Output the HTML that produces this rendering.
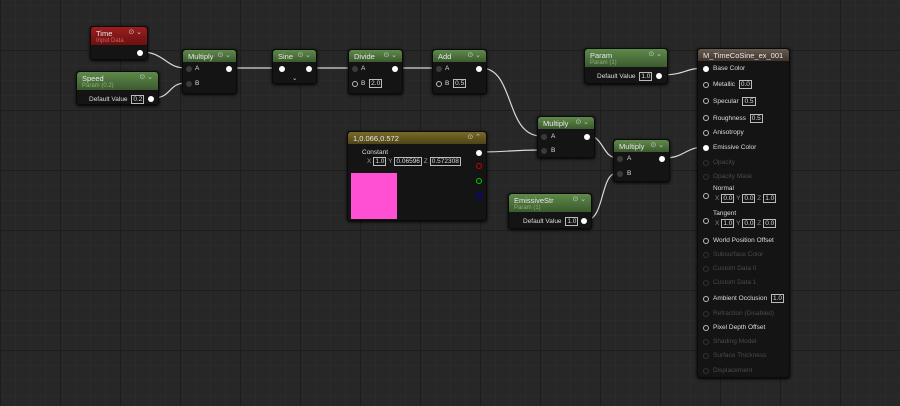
<!DOCTYPE html>
<html><head><meta charset="utf-8"><style>
*{margin:0;padding:0;box-sizing:border-box}
body{width:900px;height:406px;overflow:hidden;background:#272727;font-family:"Liberation Sans",sans-serif;position:relative;
background-image:linear-gradient(#1d1d1d 1px,transparent 1px),linear-gradient(90deg,#1d1d1d 1px,transparent 1px),linear-gradient(#2b2b2b 1px,transparent 1px),linear-gradient(90deg,#2b2b2b 1px,transparent 1px);
background-size:60px 60px,60px 60px,15px 15px,15px 15px;background-position:0 50px,0 0,0 5px,0 0}
.n{position:absolute;background:#141414;border-radius:3px;box-shadow:0 1px 3px #000;border:1px solid #0a0a0a}
.h{height:12px;border-radius:3px 3px 0 0;color:#e8e8e8;font-size:7.5px;padding:2px 5px;position:relative;white-space:nowrap}
.h.g{background:linear-gradient(#5f8a4a,#3b5a2f)}
.h.r{background:linear-gradient(#9a1e1e,#6a1010)}
.h.y{background:linear-gradient(#7a6a2a,#4d4418)}
.h.b{background:linear-gradient(#6a5a4e,#3e342e)}
.sub{font-size:6px;color:#8fb07a;position:absolute;left:5px;top:11px}
.ic{position:absolute;right:5px;top:1px;font-size:7px;color:#ccc}
.t{position:absolute;font-size:6.5px;color:#ddd;white-space:nowrap}
.dim{color:#4a4a4a}
.pin{position:absolute;width:6px;height:6px;border-radius:50%;background:#fff}
.pin.o{background:none;border:1.2px solid #bbb}
.pin.d{background:#3a3a3a}
.box{display:inline-block;border:1px solid #bbb;padding:0 1px;line-height:7px;font-size:6.5px;margin-left:2px}
</style></head><body>
<svg width="900" height="406" style="position:absolute;left:0;top:0" fill="none" stroke="#d8d8d8" stroke-width="1.2">
<path d="M141 52 C165 52,165 68,186 68"/>
<path d="M153 98 C172 98,168 83,186 83"/>
<path d="M231 68 L281 68"/>
<path d="M311 68 L352 68"/>
<path d="M397 68 L436 68"/>
<path d="M481 68 C515 68,505 136,541 136"/>
<path d="M481 152 C510 152,510 150,541 150"/>
<path d="M589 136 C603 136,603 158,617 158"/>
<path d="M586 220 C605 220,600 173,617 173"/>
<path d="M664 158 C685 158,685 147,705 147"/>
<path d="M661 75 C685 75,685 68,705 68"/>
</svg>

<div class="n" style="left:90px;top:26px;width:58px;height:34px"><div class="h r" style="height:18px">Time<span class="sub" style="color:#d06060">Input Data</span><span class="ic">⊙ ⌄</span></div><div class="pin" style="left:46px;top:23px"></div></div>

<div class="n" style="left:76px;top:71px;width:83px;height:34px"><div class="h g" style="height:18px">Speed<span class="sub">Param (0.2)</span><span class="ic">⊙ ⌄</span></div><span class="t" style="left:12px;top:23px">Default Value <span class="box">0.2</span></span><div class="pin" style="left:71px;top:24px"></div></div>

<div class="n" style="left:182px;top:49px;width:55px;height:45px"><div class="h g">Multiply<span class="ic">⊙ ⌄</span></div><div class="pin d" style="left:3px;top:16px"></div><span class="t" style="left:12px;top:15px">A</span><div class="pin d" style="left:3px;top:31px"></div><span class="t" style="left:12px;top:30px">B</span><div class="pin" style="left:43px;top:16px"></div></div>

<div class="n" style="left:272px;top:49px;width:45px;height:35px"><div class="h g">Sine<span class="ic">⊙ ⌄</span></div><div class="pin" style="left:6px;top:16px"></div><div class="pin" style="left:33px;top:16px"></div><span class="t" style="left:19px;top:24px">⌄</span></div>

<div class="n" style="left:348px;top:49px;width:55px;height:45px"><div class="h g">Divide<span class="ic">⊙ ⌄</span></div><div class="pin d" style="left:3px;top:16px"></div><span class="t" style="left:12px;top:15px">A</span><div class="pin o" style="left:3px;top:31px"></div><span class="t" style="left:12px;top:29px">B <span class="box">2.0</span></span><div class="pin" style="left:43px;top:16px"></div></div>

<div class="n" style="left:432px;top:49px;width:55px;height:45px"><div class="h g">Add<span class="ic">⊙ ⌄</span></div><div class="pin d" style="left:3px;top:16px"></div><span class="t" style="left:12px;top:15px">A</span><div class="pin o" style="left:3px;top:31px"></div><span class="t" style="left:12px;top:29px">B <span class="box">0.5</span></span><div class="pin" style="left:43px;top:16px"></div></div>

<div class="n" style="left:584px;top:48px;width:84px;height:36px"><div class="h g" style="height:18px">Param<span class="sub">Param (1)</span><span class="ic">⊙ ⌄</span></div><span class="t" style="left:12px;top:23px">Default Value <span class="box">1.0</span></span><div class="pin" style="left:71px;top:24px"></div></div>

<div class="n" style="left:347px;top:131px;width:140px;height:90px"><div class="h y">1,0.066,0.572<span class="ic">⊙ ⌃</span></div><span class="t" style="left:14px;top:17px">Constant</span><div class="pin" style="left:128px;top:18px"></div><span class="t" style="left:19px;top:25px;color:#999">X<span class="box" style="color:#ddd">1.0</span> Y<span class="box" style="color:#ddd">0.06596</span> Z<span class="box" style="color:#ddd">0.572308</span></span><div class="pin o" style="left:128px;top:31px;border-color:#c00"></div><div class="pin o" style="left:128px;top:46px;border-color:#0c0"></div><div class="pin o" style="left:128px;top:61px;border-color:#00c"></div><div style="position:absolute;left:3px;top:41px;width:46px;height:46px;background:#ff4fd2"></div></div>

<div class="n" style="left:537px;top:116px;width:58px;height:42px"><div class="h g">Multiply<span class="ic">⊙ ⌄</span></div><div class="pin d" style="left:3px;top:17px"></div><span class="t" style="left:13px;top:16px">A</span><div class="pin d" style="left:3px;top:31px"></div><span class="t" style="left:13px;top:30px">B</span><div class="pin" style="left:46px;top:17px"></div></div>

<div class="n" style="left:613px;top:139px;width:57px;height:43px"><div class="h g">Multiply<span class="ic">⊙ ⌄</span></div><div class="pin d" style="left:3px;top:16px"></div><span class="t" style="left:13px;top:15px">A</span><div class="pin d" style="left:3px;top:31px"></div><span class="t" style="left:13px;top:30px">B</span><div class="pin" style="left:45px;top:16px"></div></div>

<div class="n" style="left:508px;top:193px;width:84px;height:36px"><div class="h g" style="height:18px">EmissiveStr<span class="sub">Param (1)</span><span class="ic">⊙ ⌄</span></div><span class="t" style="left:14px;top:23px">Default Value <span class="box">1.0</span></span><div class="pin" style="left:72px;top:24px"></div></div>

<div class="n" style="left:697px;top:48px;width:93px;height:330px"><div class="h b">M_TimeCoSine_ex_001</div>
<div class="pin" style="left:5px;top:17px"></div><span class="t" style="left:15px;top:16px">Base Color</span>
<div class="pin o" style="left:5px;top:33px"></div><span class="t" style="left:15px;top:31px">Metallic <span class="box">0.0</span></span>
<div class="pin o" style="left:5px;top:49px"></div><span class="t" style="left:15px;top:48px">Specular <span class="box">0.5</span></span>
<div class="pin o" style="left:5px;top:66px"></div><span class="t" style="left:15px;top:65px">Roughness <span class="box">0.5</span></span>
<div class="pin o" style="left:5px;top:81px"></div><span class="t" style="left:15px;top:80px">Anisotropy</span>
<div class="pin" style="left:5px;top:96px"></div><span class="t" style="left:15px;top:95px">Emissive Color</span>
<div class="pin o" style="left:5px;top:111px;border-color:#333"></div><span class="t dim" style="left:15px;top:110px">Opacity</span>
<div class="pin o" style="left:5px;top:125px;border-color:#333"></div><span class="t dim" style="left:15px;top:124px">Opacity Mask</span>
<span class="t" style="left:15px;top:136px">Normal</span><div class="pin o" style="left:5px;top:144px"></div><span class="t" style="left:17px;top:145px;color:#888">X<span class="box" style="color:#ddd">0.0</span> Y<span class="box" style="color:#ddd">0.0</span> Z<span class="box" style="color:#ddd">1.0</span></span>
<span class="t" style="left:15px;top:161px">Tangent</span><div class="pin o" style="left:5px;top:169px"></div><span class="t" style="left:17px;top:170px;color:#888">X<span class="box" style="color:#ddd">1.0</span> Y<span class="box" style="color:#ddd">0.0</span> Z<span class="box" style="color:#ddd">0.0</span></span>
<div class="pin o" style="left:5px;top:189px"></div><span class="t" style="left:15px;top:188px">World Position Offset</span>
<div class="pin o" style="left:5px;top:203px;border-color:#333"></div><span class="t dim" style="left:15px;top:202px">Subsurface Color</span>
<div class="pin o" style="left:5px;top:217px;border-color:#333"></div><span class="t dim" style="left:15px;top:216px">Custom Data 0</span>
<div class="pin o" style="left:5px;top:231px;border-color:#333"></div><span class="t dim" style="left:15px;top:230px">Custom Data 1</span>
<div class="pin o" style="left:5px;top:247px"></div><span class="t" style="left:15px;top:245px">Ambient Occlusion <span class="box">1.0</span></span>
<div class="pin o" style="left:5px;top:262px;border-color:#333"></div><span class="t dim" style="left:15px;top:261px">Refraction (Disabled)</span>
<div class="pin o" style="left:5px;top:276px"></div><span class="t" style="left:15px;top:275px">Pixel Depth Offset</span>
<div class="pin o" style="left:5px;top:290px;border-color:#333"></div><span class="t dim" style="left:15px;top:289px">Shading Model</span>
<div class="pin o" style="left:5px;top:304px;border-color:#333"></div><span class="t dim" style="left:15px;top:303px">Surface Thickness</span>
<div class="pin o" style="left:5px;top:319px;border-color:#333"></div><span class="t dim" style="left:15px;top:318px">Displacement</span>
</div>
</body></html>
